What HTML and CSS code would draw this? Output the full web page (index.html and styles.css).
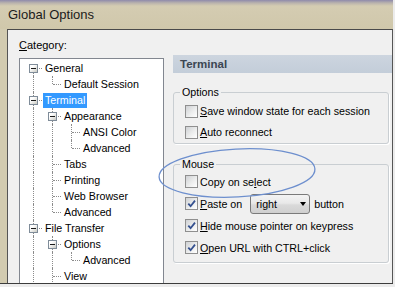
FILE: index.html
```html
<!DOCTYPE html>
<html lang="en">
<head>
  <meta charset="UTF-8" />
  <title>Global Options</title>
  <link rel="stylesheet" href="styles.css">
</head>
<body>
  <div class="window">
    <div class="titlebar">Global Options</div>
    <div class="frame">
      <div class="frame-left"></div>
      <div class="content">

        <!-- Category tree -->
        <div class="category">
          <div class="category-label"><u>C</u>ategory:</div>
          <div class="tree">
            <div class="node"><span class="guide first"><span class="expander"></span></span><span class="label">General</span></div>
            <div class="node"><span class="guide"></span><span class="guide end"></span><span class="label">Default Session</span></div>
            <div class="node"><span class="guide tee"><span class="expander"></span></span><span class="label selected">Terminal</span></div>
            <div class="node"><span class="guide"></span><span class="guide tee"><span class="expander"></span></span><span class="label">Appearance</span></div>
            <div class="node"><span class="guide"></span><span class="guide"></span><span class="guide tee"></span><span class="label">ANSI Color</span></div>
            <div class="node"><span class="guide"></span><span class="guide"></span><span class="guide end"></span><span class="label">Advanced</span></div>
            <div class="node"><span class="guide"></span><span class="guide tee"></span><span class="label">Tabs</span></div>
            <div class="node"><span class="guide"></span><span class="guide tee"></span><span class="label">Printing</span></div>
            <div class="node"><span class="guide"></span><span class="guide tee"></span><span class="label">Web Browser</span></div>
            <div class="node"><span class="guide"></span><span class="guide end"></span><span class="label">Advanced</span></div>
            <div class="node"><span class="guide tee"><span class="expander"></span></span><span class="label">File Transfer</span></div>
            <div class="node"><span class="guide"></span><span class="guide tee"><span class="expander"></span></span><span class="label">Options</span></div>
            <div class="node"><span class="guide"></span><span class="guide"></span><span class="guide end"></span><span class="label">Advanced</span></div>
            <div class="node"><span class="guide"></span><span class="guide tee"></span><span class="label">View</span></div>
          </div>
        </div>

        <!-- Settings panel -->
        <div class="panel">
          <div class="panel-header">Terminal</div>

          <fieldset class="group group-options">
            <legend>Options</legend>
            <div class="check"><span class="box"></span><span><u>S</u>ave window state for each session</span></div>
            <div class="check"><span class="box"></span><span><u>A</u>uto reconnect</span></div>
          </fieldset>

          <fieldset class="group group-mouse">
            <legend>Mouse</legend>
            <div class="check"><span class="box"></span><span>Copy on se<u>l</u>ect</span></div>
            <div class="check">
              <span class="box checked"><svg viewBox="0 0 11 11"><path d="M2.3 5.6 L4.6 8.2 L9 2.6" /></svg></span>
              <span><u>P</u>aste on</span>
              <span class="select"><span>right</span><span class="arrow"></span></span>
              <span class="after-select">button</span>
            </div>
            <div class="check"><span class="box checked"><svg viewBox="0 0 11 11"><path d="M2.3 5.6 L4.6 8.2 L9 2.6" /></svg></span><span><u>H</u>ide mouse pointer on keypress</span></div>
            <div class="check"><span class="box checked"><svg viewBox="0 0 11 11"><path d="M2.3 5.6 L4.6 8.2 L9 2.6" /></svg></span><span><u>O</u>pen URL with CTRL+click</span></div>
          </fieldset>
        </div>

      </div>
    </div>
  </div>

  <!-- hand-drawn highlight around "Copy on select" -->
  <svg class="annotation" width="395" height="287" viewBox="0 0 395 287">
    <ellipse cx="237" cy="173" rx="78" ry="24" transform="rotate(-3 237 173)" />
  </svg>
</body>
</html>
```

FILE: styles.css
```css
* {
  box-sizing: border-box;
}

html, body {
  margin: 0;
}

body {
  position: relative;
  width: 395px;
  height: 287px;
  overflow: hidden;
  background: #ececec;
  font-family: "Liberation Sans", Arial, sans-serif;
  font-size: 10.7px;
  color: #000;
}

/* Window frame */
.window {
  width: 393px;
  height: 284px;
  display: flex;
  flex-direction: column;
  background: #d2cbb0;
  border-bottom: 1px solid #3c3c3c;
}

.titlebar {
  height: 29px;
  padding: 7px 0 0 8px;
  font-size: 13px;
  line-height: 15px;
  color: #1b1b1b;
  background: linear-gradient(to bottom, #8e8aab 0, #bab3ad 3px, #d4ccb2 6px, #d0c8ab 28px);
}

.frame {
  flex: 1;
  display: flex;
  min-height: 0;
}

.frame-left {
  width: 7px;
  flex: none;
  background: #d2cbb0;
}

.content {
  flex: 1;
  display: flex;
  background: #f0f0f0;
  border-top: 1px solid #4a4a4a;
  border-left: 1px solid #555;
  border-right: 1px solid #555;
  overflow: hidden;
}

/* Category tree */
.category {
  flex: none;
  padding: 9px 0 0 11px;
}

.category-label {
  font-size: 11px;
  line-height: 13px;
  height: 13px;
  margin-bottom: 6px;
}

.tree {
  width: 145px;
  height: 260px;
  background: #fff;
  border: 1px solid #828790;
  padding: 1px 0 0 4px;
}

.node {
  display: flex;
  align-items: center;
  height: 16px;
}

.guide {
  position: relative;
  flex: none;
  width: 19px;
  height: 16px;
}

.guide::before {
  content: "";
  position: absolute;
  left: 9px;
  top: 0;
  bottom: 0;
  border-left: 1px dotted #8c8c8c;
}

.guide.end::before {
  bottom: 8px;
}

.guide.first::before {
  top: 8px;
}

.guide.tee::after,
.guide.end::after,
.guide.first::after {
  content: "";
  position: absolute;
  left: 10px;
  right: 1px;
  top: 8px;
  border-top: 1px dotted #8c8c8c;
}

.expander {
  position: absolute;
  z-index: 1;
  left: 5px;
  top: 4px;
  width: 9px;
  height: 9px;
  border: 1px solid #7f8c99;
  background: linear-gradient(135deg, #fff 30%, #c9c9c2);
}

.expander::after {
  content: "";
  position: absolute;
  left: 1px;
  top: 3px;
  width: 5px;
  height: 1px;
  background: #1a1a1a;
}

.label {
  padding: 0 2px;
  height: 15px;
  line-height: 15px;
  white-space: nowrap;
}

.label.selected {
  background: #3399ff;
  color: #fff;
}

/* Right panel */
.panel {
  flex: 1;
  display: flex;
  flex-direction: column;
  padding: 25px 0 0 9px;
}

.panel-header {
  height: 18px;
  line-height: 18px;
  padding-left: 7px;
  font-size: 11.5px;
  font-weight: bold;
  color: #3b4652;
  background: linear-gradient(to bottom, #cdd5df, #c3cdd9);
}

.group {
  margin: 12.5px 3px 0 0;
  padding: 2px 6px 0 6px;
  min-width: 0;
  border: 1px solid #c9ced2;
  border-radius: 3px;
  box-shadow: 1px 1px 0 #fff;
}

.group legend {
  padding: 0 2px;
  line-height: 13px;
}

.group-options .check {
  height: 21px;
}

.group-mouse {
  margin-top: 14px;
  padding-top: 0;
  padding-bottom: 3px;
}

.check {
  display: flex;
  align-items: center;
  height: 22px;
  padding-left: 5px;
  white-space: nowrap;
}

.box {
  flex: none;
  width: 13px;
  height: 13px;
  margin-right: 2px;
  border: 1px solid #8f8f8f;
  background: linear-gradient(135deg, #cfd1d4 0%, #eceded 55%, #fff 100%);
}

.box svg {
  display: block;
  width: 11px;
  height: 11px;
}

.box path {
  fill: none;
  stroke: #34508f;
  stroke-width: 1.8;
}

.select {
  display: flex;
  align-items: center;
  justify-content: space-between;
  width: 60px;
  height: 20px;
  margin-left: 8px;
  padding-left: 5px;
  border: 1px solid #7a7a7a;
  border-radius: 3px;
  background: linear-gradient(to bottom, #f3f3f3, #e9e9e9 45%, #dadada 55%, #cfcfcf);
}

.arrow {
  width: 0;
  height: 0;
  margin-right: 3px;
  border-left: 3.5px solid transparent;
  border-right: 3.5px solid transparent;
  border-top: 4px solid #000;
}

.after-select {
  margin-left: 4px;
}

/* Annotation drawn over the dialog */
.annotation {
  position: absolute;
  left: 0;
  top: 0;
  pointer-events: none;
}

.annotation ellipse {
  fill: none;
  stroke: #6d8fce;
  stroke-width: 1.3;
}
```
